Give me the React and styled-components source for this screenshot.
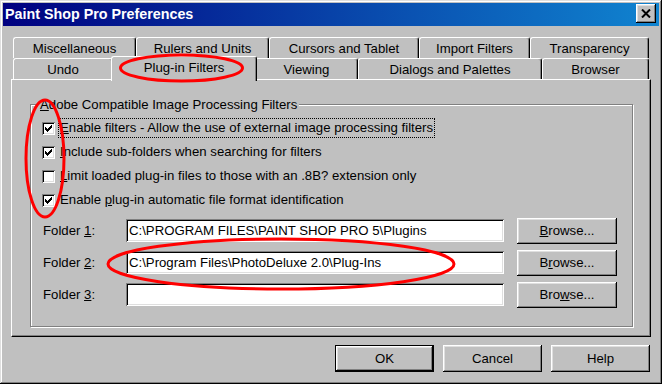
import React from 'react';
import styled, { createGlobalStyle } from 'styled-components';

const Global = createGlobalStyle`
  html, body { margin: 0; padding: 0; background: #c0c0c0; }
  body { font-family: "Liberation Sans", Arial, sans-serif; font-size: 13.2px; color: #000; }
  * { box-sizing: border-box; }
`;

const Window = styled.div`
  position: relative;
  width: 662px;
  height: 384px;
  background: #c0c0c0;
  padding: 3px;
  box-shadow: inset -1px -1px 0 #000, inset 1px 1px 0 #dfdfdf,
    inset -2px -2px 0 #808080, inset 2px 2px 0 #fff;
  display: flex;
  flex-direction: column;
  overflow: hidden;
`;

const TitleBar = styled.div`
  height: 23px;
  flex: none;
  background: linear-gradient(to right, #000080, #1084d0);
  display: flex;
  align-items: flex-start;
  justify-content: space-between;
  padding: 0 3px 0 2px;
`;

const Title = styled.span`
  color: #fff;
  font-weight: bold;
  font-size: 14.3px;
  line-height: 23px;
`;

const CloseBtn = styled.div`
  width: 20px;
  height: 19px;
  margin-top: 1px;
  background: #c0c0c0;
  box-shadow: inset -1px -1px 0 #000, inset 1px 1px 0 #fff,
    inset -2px -2px 0 #808080, inset 2px 2px 0 #dfdfdf;
  display: flex;
  align-items: center;
  justify-content: center;
`;

const Body = styled.div`
  padding: 11px 0 0 8px;
  display: flex;
  flex-direction: column;
`;

const TabControl = styled.div`
  width: 640px;
  display: flex;
  flex-direction: column;
`;

const TabRow = styled.div`
  display: flex;
  align-items: flex-start;
  height: 21px;
  padding-left: 2px;
  position: relative;
  z-index: ${p => (p.$front ? 3 : 1)};
`;

const Tab = styled.div`
  width: ${p => p.$w}px;
  height: ${p => (p.$active ? 25 : 21)}px;
  margin: ${p => (p.$active ? '-2px -2px 0 -2px' : '0')};
  padding-bottom: ${p => (p.$active ? 4 : 0)}px;
  background: #c0c0c0;
  border-top: 1px solid #fff;
  border-left: 1px solid #fff;
  border-right: 1px solid #000;
  border-radius: 3px 3px 0 0;
  box-shadow: inset -1px 0 0 #808080;
  display: flex;
  align-items: center;
  justify-content: center;
  white-space: nowrap;
  position: relative;
  z-index: ${p => (p.$active ? 4 : 1)};
`;

const Panel = styled.div`
  position: relative;
  z-index: 2;
  height: 258px;
  background: #c0c0c0;
  border-top: 1px solid #fff;
  border-left: 1px solid #fff;
  border-right: 1px solid #000;
  border-bottom: 1px solid #000;
  box-shadow: inset -1px -1px 0 #808080;
  padding: 24px 0 0 18px;
`;

const GroupBox = styled.div`
  position: relative;
  width: 603px;
  height: 223px;
  border: 1px solid #808080;
  box-shadow: inset 1px 1px 0 #fff, 1px 1px 0 #fff;
  padding: 11px 0 0 11px;
`;

const Legend = styled.span`
  position: absolute;
  top: -8px;
  left: 7px;
  padding: 0 2px;
  line-height: 15px;
  background: #c0c0c0;
  white-space: nowrap;
`;

const Key = styled.span`
  text-decoration: underline;
  text-underline-offset: 1px;
`;

const CheckRow = styled.div`
  display: flex;
  align-items: center;
  height: 24px;
`;

const CheckBox = styled.div`
  width: 13px;
  height: 13px;
  flex: none;
  background: #fff;
  box-shadow: inset 1px 1px 0 #808080, inset -1px -1px 0 #fff,
    inset 2px 2px 0 #000, inset -2px -2px 0 #dfdfdf;
  margin-right: 3px;
  svg { display: block; }
`;

const CheckLabel = styled.span`
  border: 1px dotted ${p => (p.$focus ? '#000' : 'transparent')};
  padding: 0 1px;
  line-height: 18px;
  white-space: nowrap;
`;

const FolderList = styled.div`
  margin-top: 7px;
  display: flex;
  flex-direction: column;
  gap: 9px;
`;

const FolderRow = styled.div`
  display: flex;
  align-items: center;
  height: 23px;
`;

const FolderLabel = styled.span`
  width: 84px;
  padding-left: 1px;
  flex: none;
`;

const TextField = styled.div`
  width: 378px;
  height: 23px;
  flex: none;
  background: #fff;
  box-shadow: inset 1px 1px 0 #808080, inset -1px -1px 0 #fff,
    inset 2px 2px 0 #000, inset -2px -2px 0 #dfdfdf;
  padding: 0 0 0 3px;
  line-height: 23px;
  white-space: nowrap;
  overflow: hidden;
`;

const Button = styled.div`
  width: ${p => p.$w}px;
  height: ${p => p.$h}px;
  flex: none;
  margin-left: ${p => p.$ml || 0}px;
  background: #c0c0c0;
  display: flex;
  align-items: center;
  justify-content: center;
  border: ${p => (p.$default ? '1px solid #000' : 'none')};
  box-shadow: inset -1px -1px 0 #000, inset 1px 1px 0 #fff,
    inset -2px -2px 0 #808080, inset 2px 2px 0 #dfdfdf;
  white-space: nowrap;
`;

const Footer = styled.div`
  width: 640px;
  margin-top: 8px;
  padding-right: 1px;
  display: flex;
  justify-content: flex-end;
  gap: 9px;
`;

const Overlay = styled.svg`
  position: absolute;
  top: 0;
  left: 0;
  pointer-events: none;
  z-index: 10;
`;

const CHECK = [
  '......X',
  '.....XX',
  'X...XXX',
  'XX.XXX.',
  'XXXXX..',
  '.XXX...',
  '..X....',
];

function CheckMark() {
  const rects = [];
  CHECK.forEach((row, y) =>
    row.split('').forEach((c, x) => {
      if (c === 'X') rects.push(<rect key={`${x}-${y}`} x={x + 3} y={y + 3} width="1" height="1" fill="#000" />);
    })
  );
  return (
    <svg width="13" height="13" viewBox="0 0 13 13" shapeRendering="crispEdges">
      {rects}
    </svg>
  );
}

function Check({ checked, focus, children }) {
  return (
    <CheckRow>
      <CheckBox>{checked && <CheckMark />}</CheckBox>
      <CheckLabel $focus={focus}>{children}</CheckLabel>
    </CheckRow>
  );
}

const row1 = [
  ['Miscellaneous', 123],
  ['Rulers and Units', 133],
  ['Cursors and Tablet', 150],
  ['Import Filters', 111],
  ['Transparency', 119],
];
const row2 = [
  ['Undo', 100],
  ['Plug-in Filters', 146, true],
  ['Viewing', 103],
  ['Dialogs and Palettes', 184],
  ['Browser', 107],
];

export default function App() {
  return (
    <>
      <Global />
      <Window>
        <TitleBar>
          <Title>Paint Shop Pro Preferences</Title>
          <CloseBtn>
            <svg width="10" height="9" viewBox="0 0 10 9">
              <path d="M1 0.5 L9 8.5 M9 0.5 L1 8.5" stroke="#000" strokeWidth="2" />
            </svg>
          </CloseBtn>
        </TitleBar>
        <Body>
          <TabControl>
            <TabRow>
              {row1.map(([t, w]) => (
                <Tab key={t} $w={w}>{t}</Tab>
              ))}
            </TabRow>
            <TabRow $front>
              {row2.map(([t, w, a]) => (
                <Tab key={t} $w={w} $active={a}>{t}</Tab>
              ))}
            </TabRow>
            <Panel>
              <GroupBox>
                <Legend><Key>A</Key>dobe Compatible Image Processing Filters</Legend>
                <Check checked focus>
                  <Key>E</Key>nable filters - Allow the use of external image processing filters
                </Check>
                <Check checked>
                  <Key>I</Key>nclude sub-folders when searching for filters
                </Check>
                <Check>
                  <Key>L</Key>imit loaded plug-in files to those with an .8B? extension only
                </Check>
                <Check checked>
                  Enable <Key>p</Key>lug-in automatic file format identification
                </Check>
                <FolderList>
                  <FolderRow>
                    <FolderLabel>Folder <Key>1</Key>:</FolderLabel>
                    <TextField>C:\PROGRAM FILES\PAINT SHOP PRO 5\Plugins</TextField>
                    <Button $w={100} $h={26} $ml={13}><span><Key>B</Key>rowse...</span></Button>
                  </FolderRow>
                  <FolderRow>
                    <FolderLabel>Folder <Key>2</Key>:</FolderLabel>
                    <TextField>C:\Program Files\PhotoDeluxe 2.0\Plug-Ins</TextField>
                    <Button $w={100} $h={26} $ml={13}><span>B<Key>r</Key>owse...</span></Button>
                  </FolderRow>
                  <FolderRow>
                    <FolderLabel>Folder <Key>3</Key>:</FolderLabel>
                    <TextField />
                    <Button $w={100} $h={26} $ml={13}><span>Bro<Key>w</Key>se...</span></Button>
                  </FolderRow>
                </FolderList>
              </GroupBox>
            </Panel>
          </TabControl>
          <Footer>
            <Button $w={99} $h={27} $default>OK</Button>
            <Button $w={99} $h={27}>Cancel</Button>
            <Button $w={99} $h={27}>Help</Button>
          </Footer>
        </Body>
        <Overlay width="662" height="384" viewBox="0 0 662 384">
          <g fill="none" stroke="#ff0000" strokeWidth="3">
            <ellipse cx="181.5" cy="68" rx="61" ry="13" />
            <ellipse cx="45" cy="158.5" rx="19" ry="58.5" />
            <ellipse cx="281" cy="264" rx="173" ry="25" />
          </g>
        </Overlay>
      </Window>
    </>
  );
}
